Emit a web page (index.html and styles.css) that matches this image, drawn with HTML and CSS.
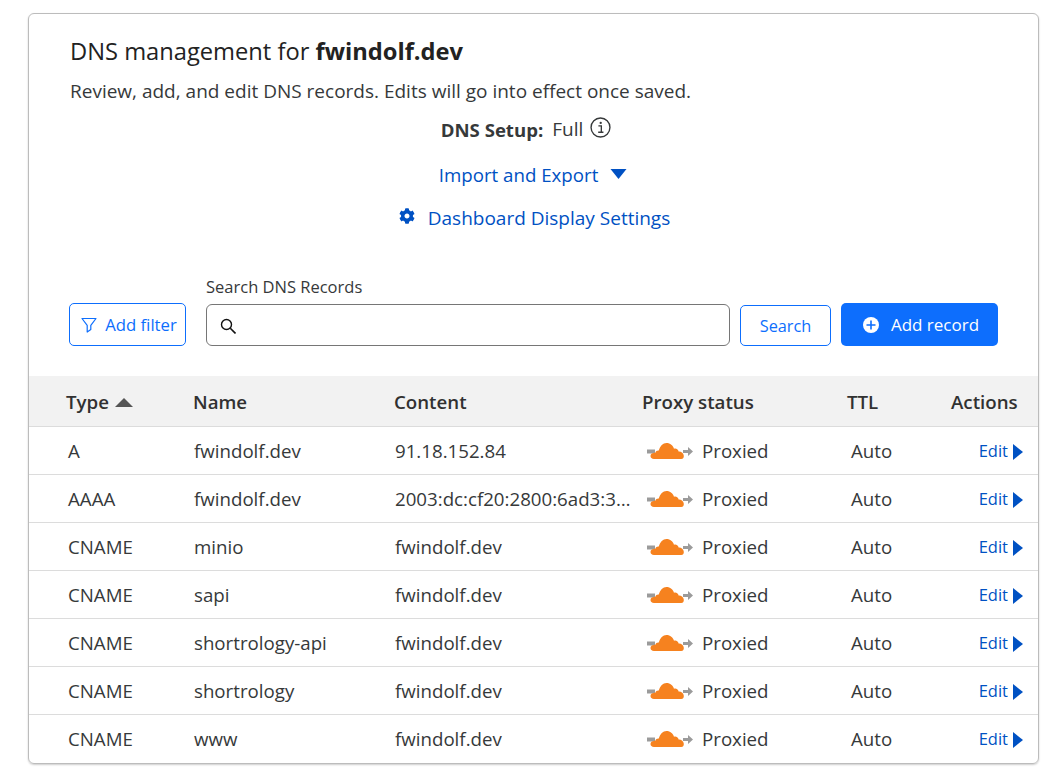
FILE: index.html
```html
<!DOCTYPE html>
<html lang="en">
<head>
    <meta charset="UTF-8">
    <meta name="viewport" content="width=device-width, initial-scale=1.0">
    <title>DNS management</title>
    <link rel="stylesheet" href="styles.css">
</head>
<body>
    <svg class="defs" width="0" height="0">
        <symbol id="cloud" viewBox="0 0 46 18">
            <path d="M0 7.500h8v4H0z" fill="#9b9b9b"/>
            <path d="M36 8h5V5l5 4.500-5 4.500v-3h-5z" fill="#9b9b9b"/>
            <path d="M7 17c-2.200 0-3.500-1.400-3.500-3 0-1.800 1.500-3 3.300-3 .5-.1 1-.2 1.500-.2.600-1.700 2-2.500 3.500-2.200C13 4 16 1 19.500 1c3.700 0 6.600 2.500 7.500 5.800 1-.4 2.300-.3 3.200.4.800.6 1.300 1.500 1.400 2.300 2.600-.2 5 1.500 5.200 4.200.1 1.700-.5 3.300-2.600 3.300z" fill="#f6821f"/>
        </symbol>
        <symbol id="edit-arrow" viewBox="0 0 10 16">
            <path d="M0 0l10 8-10 8z" fill="#0051c3"/>
        </symbol>
    </svg>

    <div class="card">
        <div class="head">
            <h1>DNS management for <b>fwindolf.dev</b></h1>
            <p class="intro">Review, add, and edit DNS records. Edits will go into effect once saved.</p>
            <div class="setup">
                <b>DNS Setup:</b> <span>Full</span>
                <svg class="info" viewBox="0 0 20 20" width="21" height="21">
                    <circle cx="10" cy="10" r="9" fill="none" stroke="#36393a" stroke-width="1.300"/>
                    <path d="M8 8.500h2.800V14M7.800 14.500h5" fill="none" stroke="#36393a" stroke-width="1.300"/>
                    <circle cx="10.200" cy="5.600" r="1.100" fill="#36393a"/>
                </svg>
            </div>
            <div class="link-row import">
                <a href="#">Import and Export</a>
                <svg viewBox="0 0 16 10" width="17" height="10"><path d="M0 0h16l-8 10z" fill="#0051c3"/></svg>
            </div>
            <div class="link-row display">
                <svg viewBox="0 0 512 512" width="16" height="16"><path fill="#0051c3" d="M487.400 315.700l-42.600-24.600c4.300-23.200 4.300-47 0-70.200l42.600-24.600c4.900-2.800 7.100-8.600 5.500-14-11.100-35.600-30-67.800-54.700-94.600-3.800-4.100-10-5.100-14.800-2.300L380.800 110c-17.900-15.400-38.500-27.300-60.800-35.100V25.800c0-5.600-3.900-10.500-9.400-11.700-36.700-8.200-74.300-7.800-109.200 0-5.500 1.200-9.400 6.100-9.400 11.700V75c-22.200 7.900-42.800 19.800-60.800 35.100L88.700 85.500c-4.900-2.800-11-1.900-14.800 2.300-24.700 26.700-43.600 58.900-54.700 94.600-1.700 5.400.6 11.200 5.500 14L67.300 221c-4.300 23.200-4.300 47 0 70.200l-42.600 24.600c-4.900 2.800-7.100 8.600-5.500 14 11.100 35.600 30 67.800 54.700 94.600 3.800 4.100 10 5.100 14.800 2.300l42.600-24.600c17.900 15.400 38.500 27.300 60.800 35.100v49.200c0 5.600 3.900 10.500 9.400 11.700 36.700 8.200 74.300 7.800 109.200 0 5.500-1.200 9.400-6.100 9.400-11.700v-49.200c22.200-7.900 42.800-19.800 60.800-35.100l42.600 24.600c4.900 2.800 11 1.900 14.800-2.300 24.700-26.700 43.600-58.900 54.700-94.600 1.500-5.500-.7-11.300-5.600-14.100zM256 336c-44.100 0-80-35.900-80-80s35.900-80 80-80 80 35.900 80 80-35.900 80-80 80z"/></svg>
                <a href="#">Dashboard Display Settings</a>
            </div>
        </div>

        <div class="toolbar">
            <button class="btn btn-filter">
                <svg viewBox="0 0 16 16" width="16" height="16"><path d="M1 1.500h14L9.800 8.300v4.200L6.200 15V8.300z" fill="none" stroke="#0d6efd" stroke-width="1.200" stroke-linejoin="round"/></svg>
                Add filter
            </button>
            <div class="search-group">
                <label for="search">Search DNS Records</label>
                <div class="search-box">
                    <svg viewBox="0 0 16 16" width="16" height="16"><circle cx="6.500" cy="6.500" r="5" fill="none" stroke="#111" stroke-width="1.400"/><path d="M10.300 10.300L15.500 15.500" stroke="#111" stroke-width="1.600"/></svg>
                    <input id="search" type="text">
                </div>
            </div>
            <button class="btn btn-search">Search</button>
            <button class="btn btn-add">
                <svg viewBox="0 0 16 16" width="16" height="16"><circle cx="8" cy="8" r="8" fill="#fff"/><path d="M8 3.500v9M3.500 8h9" stroke="#0d6efd" stroke-width="1.600"/></svg>
                Add record
            </button>
        </div>

        <div class="table">
            <div class="row row-head">
                <div>Type <span class="sort"></span></div>
                <div>Name</div>
                <div>Content</div>
                <div>Proxy status</div>
                <div>TTL</div>
                <div>Actions</div>
            </div>
            <div class="row">
                <div>A</div><div>fwindolf.dev</div><div class="content">91.18.152.84</div>
                <div class="proxy"><svg width="46" height="18"><use href="#cloud"/></svg>Proxied</div>
                <div>Auto</div>
                <div class="edit"><a href="#">Edit</a><svg width="10" height="16"><use href="#edit-arrow"/></svg></div>
            </div>
            <div class="row">
                <div>AAAA</div><div>fwindolf.dev</div><div class="content">2003:dc:cf20:2800:6ad3:3…</div>
                <div class="proxy"><svg width="46" height="18"><use href="#cloud"/></svg>Proxied</div>
                <div>Auto</div>
                <div class="edit"><a href="#">Edit</a><svg width="10" height="16"><use href="#edit-arrow"/></svg></div>
            </div>
            <div class="row">
                <div>CNAME</div><div>minio</div><div class="content">fwindolf.dev</div>
                <div class="proxy"><svg width="46" height="18"><use href="#cloud"/></svg>Proxied</div>
                <div>Auto</div>
                <div class="edit"><a href="#">Edit</a><svg width="10" height="16"><use href="#edit-arrow"/></svg></div>
            </div>
            <div class="row">
                <div>CNAME</div><div>sapi</div><div class="content">fwindolf.dev</div>
                <div class="proxy"><svg width="46" height="18"><use href="#cloud"/></svg>Proxied</div>
                <div>Auto</div>
                <div class="edit"><a href="#">Edit</a><svg width="10" height="16"><use href="#edit-arrow"/></svg></div>
            </div>
            <div class="row">
                <div>CNAME</div><div>shortrology-api</div><div class="content">fwindolf.dev</div>
                <div class="proxy"><svg width="46" height="18"><use href="#cloud"/></svg>Proxied</div>
                <div>Auto</div>
                <div class="edit"><a href="#">Edit</a><svg width="10" height="16"><use href="#edit-arrow"/></svg></div>
            </div>
            <div class="row">
                <div>CNAME</div><div>shortrology</div><div class="content">fwindolf.dev</div>
                <div class="proxy"><svg width="46" height="18"><use href="#cloud"/></svg>Proxied</div>
                <div>Auto</div>
                <div class="edit"><a href="#">Edit</a><svg width="10" height="16"><use href="#edit-arrow"/></svg></div>
            </div>
            <div class="row row-last">
                <div>CNAME</div><div>www</div><div class="content">fwindolf.dev</div>
                <div class="proxy"><svg width="46" height="18"><use href="#cloud"/></svg>Proxied</div>
                <div>Auto</div>
                <div class="edit"><a href="#">Edit</a><svg width="10" height="16"><use href="#edit-arrow"/></svg></div>
            </div>
        </div>
    </div>
</body>
</html>
```

FILE: styles.css
```css
body {
    margin: 0;
    padding: 13px 13px 0 28px;
    height: 775px;
    box-sizing: border-box;
    overflow: hidden;
    background: #fff;
    color: #36393a;
    font-family: "Open Sans", "Noto Sans", sans-serif;
    font-size: 18.7px;
}

.defs {
    display: block;
}

a {
    color: #0051c3;
    text-decoration: none;
}

.card {
    width: 1011px;
    height: 751px;
    box-sizing: border-box;
    border: 1px solid #bcbcbc;
    border-radius: 6px;
    box-shadow: 0 1px 2px rgba(0, 0, 0, 0.2);
    overflow: hidden;
}

.head {
    padding: 21px 41px 0;
    height: 246px;
    box-sizing: border-box;
}

h1 {
    margin: 0;
    font-size: 23.7px;
    font-weight: 400;
    line-height: 32px;
    color: #222;
}

h1 b {
    font-weight: 700;
}

.intro {
    margin: 11px 0 0;
    line-height: 26px;
    font-size: 19px;
}

.setup {
    display: flex;
    justify-content: center;
    align-items: center;
    gap: 9px;
    margin: 12px 0 0 -15px;
    height: 26px;
    font-size: 19px;
}

.setup b {
    font-size: 18.6px;
}

.setup .info {
    margin: -3px 0 0 -2px;
}

.link-row {
    display: flex;
    justify-content: center;
    align-items: center;
    color: #0051c3;
}

.import {
    gap: 12px;
    margin: 19px 0 0 -1px;
    height: 26px;
}

.display {
    gap: 13px;
    margin: 18px 0 0 2px;
    height: 26px;
    font-size: 19px;
}

.display svg {
    margin-top: -4px;
}

.toolbar {
    display: flex;
    align-items: flex-end;
    padding: 0 40px 0 40px;
    height: 116px;
    box-sizing: border-box;
}

.btn {
    font-family: inherit;
    font-size: 17px;
    border-radius: 5px;
    background: #fff;
    border: 1px solid #0d6efd;
    color: #0d6efd;
    height: 43px;
    padding: 0;
    display: flex;
    align-items: center;
    justify-content: center;
    margin-bottom: 30px;
}

.btn-filter {
    width: 117px;
    gap: 8px;
    margin-right: 20px;
    padding-left: 3px;
    font-size: 16.7px;
}

.search-group {
    width: 524px;
    margin-right: 10px;
    margin-bottom: 30px;
}

.search-group label {
    display: block;
    font-size: 16.5px;
    line-height: 22px;
    margin-bottom: 6px;
}

.search-box {
    display: flex;
    align-items: center;
    gap: 8px;
    height: 42px;
    box-sizing: border-box;
    border: 1px solid #767676;
    border-radius: 6px;
    padding: 0 12px 0 13px;
}

.search-box svg {
    margin-top: 2px;
}

.search-box input {
    flex: 1;
    min-width: 0;
    border: none;
    outline: none;
    font-size: 16px;
}

.btn-search {
    width: 91px;
    height: 41px;
    margin-right: 10px;
    margin-bottom: 30px;
    padding-top: 1px;
    font-size: 16.3px;
}

.btn-add {
    width: 157px;
    background: #0d6efd;
    color: #fff;
    gap: 12px;
    padding-left: 3px;
    border: none;
    margin-bottom: 30px;
}

.row {
    display: grid;
    grid-template-columns: 126px 201px 247px 209px 96px 1fr;
    align-items: center;
    height: 48px;
    box-sizing: border-box;
    padding-left: 39px;
    border-bottom: 1px solid #dcdcdc;
}

.row-last {
    border-bottom-color: transparent;
}

.row-head {
    height: 51px;
    padding-left: 37px;
    background: #f2f2f2;
    font-weight: 600;
    color: #313131;
    grid-template-columns: 127px 201px 248px 205px 104px 1fr;
}

.sort {
    display: inline-block;
    width: 0;
    height: 0;
    margin: 0 0 2px 1px;
    border-left: 9px solid transparent;
    border-right: 9px solid transparent;
    border-bottom: 9px solid #555;
}

.content {
    white-space: nowrap;
}

.proxy {
    display: flex;
    align-items: center;
    gap: 9px;
    padding-left: 5px;
    margin-right: -4px;
}

.edit {
    display: flex;
    align-items: center;
    justify-content: flex-end;
    gap: 5px;
    padding-right: 15px;
    font-size: 16.5px;
}

.edit svg {
    margin-top: 2px;
}
```
